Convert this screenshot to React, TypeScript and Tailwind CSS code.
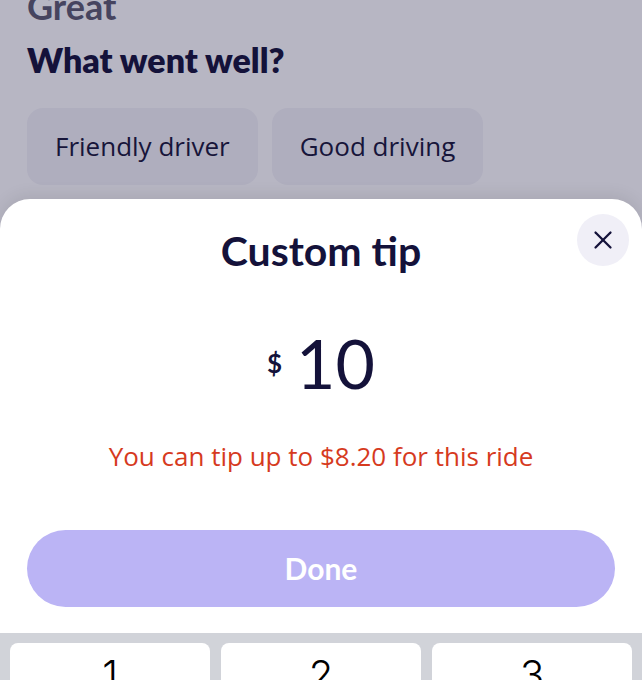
import { X } from "lucide-react"

const chips = ["Friendly driver", "Good driving"]
const keys = ["1", "2", "3"]

export default function App() {
  return (
    <div className="relative flex h-[680px] w-[642px] flex-col overflow-hidden bg-[#b7b6c3] font-['Lato',sans-serif]">
      {/* dimmed rating screen behind the sheet */}
      <div className="h-[199px] shrink-0 px-[27px]">
        <div className="-mt-[14px] text-[36px] font-bold leading-[40px] text-[#46445f]">Great</div>
        <div className="mt-[14px] text-[34px] font-extrabold leading-[40px] text-[#14123a]">What went well?</div>
        <div className="mt-[28px] flex gap-[14px]">
          {chips.map((c) => (
            <div
              key={c}
              className="flex h-[77px] items-center rounded-[16px] bg-[#afaebe] px-[28px] font-['Open_Sans',sans-serif] text-[26px] text-[#17153a]"
            >
              {c}
            </div>
          ))}
        </div>
      </div>

      {/* bottom sheet */}
      <div className="relative flex flex-1 flex-col rounded-t-[30px] bg-white shadow-[0_-4px_16px_rgba(0,0,0,0.08)]">
        <button className="absolute right-[13px] top-[15px] flex h-[52px] w-[52px] items-center justify-center rounded-full bg-[#f0eff7] text-[#14123a]">
          <X className="h-[30px] w-[30px]" strokeWidth={1.8} />
        </button>

        <div className="mt-[28px] text-center text-[41px] font-bold leading-[48px] text-[#14123a]">Custom tip</div>

        <div className="mt-[48px] flex items-center justify-center gap-[14px] text-[#14123a]">
          <span className="text-[26px] font-bold">$</span>
          <span className="text-[68px] leading-[80px]">10</span>
        </div>

        <div className="mt-[38px] text-center font-['Open_Sans',sans-serif] text-[26px] leading-[30px] text-[#d63a1e]">
          You can tip up to $8.20 for this ride
        </div>

        <div className="mx-[27px] mt-[59px] flex h-[77px] items-center justify-center rounded-full bg-[#bbb4f5] text-[30px] font-bold text-white">
          Done
        </div>

        <div className="mt-[26px] flex flex-1 gap-[11px] bg-[#d1d3d9] px-[10px] pt-[10px]">
          {keys.map((k) => (
            <div
              key={k}
              className="flex h-[60px] flex-1 justify-center rounded-[8px] bg-white pt-[8px] font-['Inter',sans-serif] text-[40px] font-light leading-[48px] text-black"
            >
              {k}
            </div>
          ))}
        </div>
      </div>
    </div>
  )
}
